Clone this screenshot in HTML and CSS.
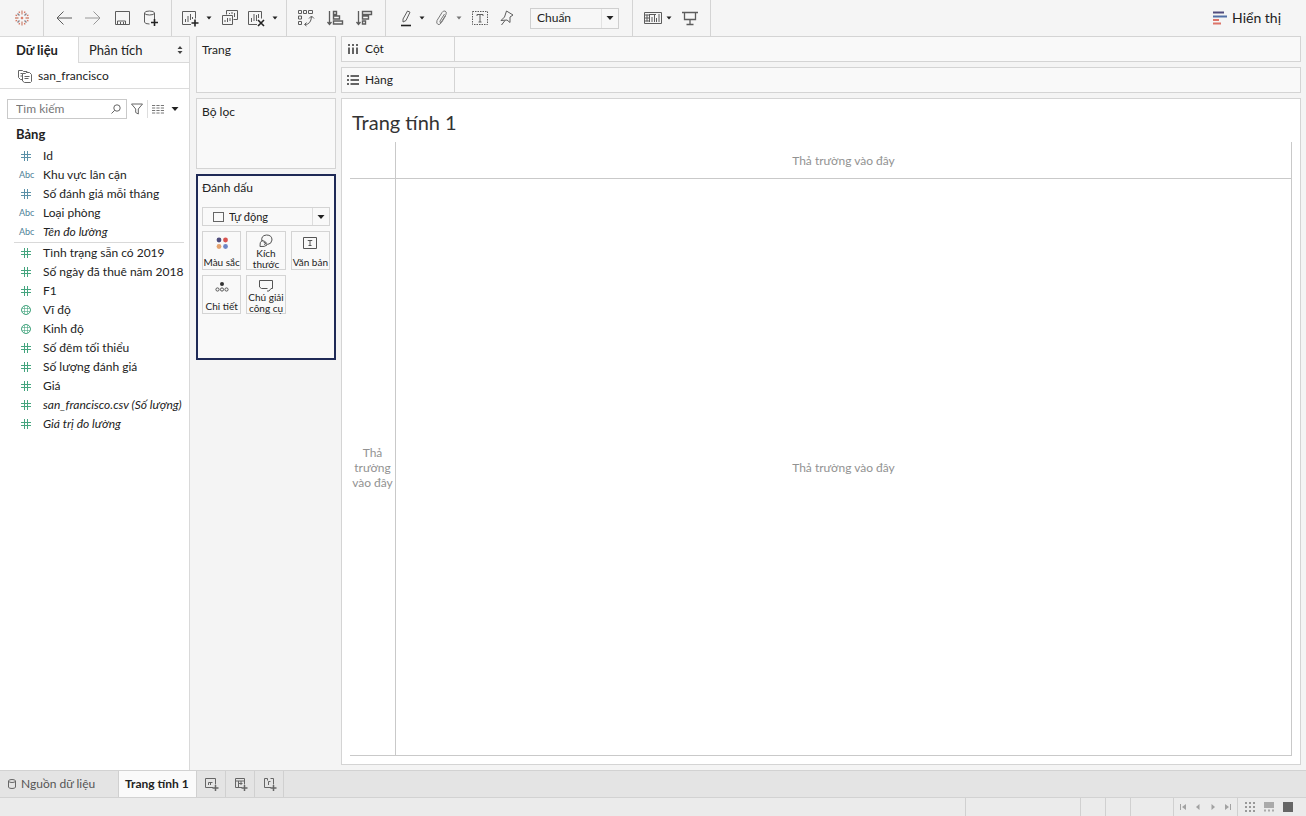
FILE: index.html
```html
<!DOCTYPE html>
<html lang="vi">
<head>
<meta charset="utf-8">
<title>Trang tính 1</title>
<link rel="stylesheet" href="styles.css">
</head>
<body>
<svg class="defs" aria-hidden="true">
  <symbol id="hash" viewBox="0 0 10 10"><path d="M3.5 0v10M6.5 0v10M0 3.5h10M0 6.5h10" fill="none" stroke="currentColor" stroke-width="1"/></symbol>
  <symbol id="globe" viewBox="0 0 10 10"><circle cx="5" cy="5" r="4.500" fill="none" stroke="currentColor"/><path d="M3.500 1v8M6.500 1v8M1 3.500h8M1 6.500h8" fill="none" stroke="currentColor" stroke-width=".6"/></symbol>
  <symbol id="caret" viewBox="0 0 8 8"><path d="M1.500 2.500h5L4 5.500z" fill="currentColor"/></symbol>
  <symbol id="bigcaret" viewBox="0 0 8 8"><path d="M.5 2h7L4 6z" fill="currentColor"/></symbol>
</svg>
<div class="app">
  <header class="toolbar">
    <div class="group group-logo">
      <button class="tool" aria-label="Trang đầu"><svg viewBox="0 0 18 18"><g fill="none" stroke-width="1.300"><path stroke="#d08a78" d="M9 1.500v4M9 12.500v4M2 9h3.500M12.500 9H16"/><path stroke="#85838b" d="M4.500 4.500l2 2M11.500 11.500l2 2M4.500 13.500l2-2M11.500 6.500l2-2"/><path stroke="#d9745f" d="M7.800 9h2.400M9 7.800v2.400M6 2.500l.6 1.600M12 2.500l-.6 1.600M6 15.500l.6-1.600M12 15.500l-.6-1.600M2.500 6l1.600.6M15.500 6l-1.600.6M2.500 12l1.600-.6M15.500 12l-1.600-.6"/></g></svg></button>
    </div>
    <div class="group group-file">
      <button class="tool" aria-label="Hoàn tác"><svg viewBox="0 0 18 18"><path d="M17 9H2M8.500 2.500L2 9l6.500 6.500"/></svg></button>
      <button class="tool faded" aria-label="Làm lại"><svg viewBox="0 0 18 18"><path d="M1 9h15M9.500 2.500L16 9l-6.500 6.500"/></svg></button>
      <button class="tool" aria-label="Lưu"><svg viewBox="0 0 18 18"><path d="M2.500 2.500h14v13h-14zM4.500 15v-3h8v3M7.500 15v-2M10.500 15v-2"/></svg></button>
      <button class="tool" aria-label="Nguồn dữ liệu mới"><svg viewBox="0 0 18 18"><ellipse cx="7.500" cy="4" rx="5" ry="2"/><path d="M2.500 4v9q0 2 5 2M12.500 4v6"/><path class="dark" d="M12.500 10v7M9 13.500h7"/></svg></button>
    </div>
    <div class="group group-sheet">
      <span class="split"><button class="tool" aria-label="Trang tính mới"><svg viewBox="0 0 18 18"><path d="M10 15.500H1.500v-13h13v7M4.500 13v-3M7 13V7M9.500 11V5M11.500 10V8"/><path class="dark" d="M14 10.500v7M10.500 14h7"/></svg></button><button class="caret" aria-label="Thêm"><svg><use href="#caret"/></svg></button></span>
      <button class="tool" aria-label="Nhân bản"><svg viewBox="0 0 18 18"><path d="M5.500 5.500v-4h11v9h-4M1.500 6.500h10v9h-10zM4 13v-2M6.500 13V9M9 12v-3M8.500 5V4M11 5V3M13.500 8V4"/></svg></button>
      <span class="split"><button class="tool" aria-label="Xóa trang"><svg viewBox="0 0 18 18"><path d="M10 15.500H1.500v-13h13v7M4.500 13V9M7 12V5M9.500 12V6M11.500 9V5"/><path class="dark" d="M11 11l6 6M17 11l-6 6"/></svg></button><button class="caret" aria-label="Tùy chọn xóa"><svg><use href="#caret"/></svg></button></span>
    </div>
    <div class="group group-sort">
      <button class="tool" aria-label="Hoán đổi"><svg viewBox="0 0 18 18"><path d="M1.500 1.500h3v3h-3zM6.500 1.500h3v3h-3zM11.500 1.500h4v3h-4zM1.500 7h3v3h-3zM1.500 12.500h3v3h-3zM8 15.500q6 0 6.500-8M12 9.500l2.500-2.500L17 9.500M9.500 13.500l-2 2 2 1.500"/></svg></button>
      <button class="tool" aria-label="Sắp xếp tăng"><svg viewBox="0 0 18 18"><path d="M3.500 2v13M1.500 13l2 2.500 2-2.500" stroke-width="1.300"/><path d="M7.500 2.500h3v3h-3zM7.500 7h6v3h-6zM7.500 12h9v3h-9z" stroke-width="1.400"/></svg></button>
      <button class="tool" aria-label="Sắp xếp giảm"><svg viewBox="0 0 18 18"><path d="M3.500 2v13M1.500 13l2 2.500 2-2.500" stroke-width="1.300"/><path d="M7.500 2.500h9v3h-9zM7.500 7h6v3h-6zM7.500 12h3v3h-3z" stroke-width="1.400"/></svg></button>
    </div>
    <div class="group group-edit">
      <span class="split"><button class="tool" aria-label="Tô sáng"><svg viewBox="0 0 18 18"><path d="M6 13V10l4.500-8 2.500 1.200-4 8.300z"/><path class="dark" d="M4 16.500h10"/></svg></button><button class="caret" aria-label="Tùy chọn tô sáng"><svg><use href="#caret"/></svg></button></span>
      <span class="split"><button class="tool soft" aria-label="Nhóm"><svg viewBox="0 0 18 18"><path d="M10.500 5l-4.500 7q-.5 2 1 1.500l5-8q1-3-1-3.500-2-.3-3 1.500l-5 8q-1 3 1 4 2 .5 3.500-2l4-6.500"/></svg></button><button class="caret faded" aria-label="Tùy chọn nhóm"><svg><use href="#caret"/></svg></button></span>
      <button class="tool" aria-label="Nhãn"><svg viewBox="0 0 18 18"><path d="M1.500 2.500h15v13h-15z" stroke-dasharray="1.500 1"/><path d="M6 7V5.500h6V7M9 5.500V13M7.500 13h3"/></svg></button>
      <button class="tool" aria-label="Ghim"><svg viewBox="0 0 18 18"><path d="M9.500 2l6.500 4-3 2v5.500l-3-2.500-6 .5 3.500-3.500zM8 11.500L4.500 16"/></svg></button>
      <span class="fit"><select aria-label="Độ vừa"><option>Chuẩn</option></select><svg class="fit-caret"><use href="#bigcaret"/></svg></span>
    </div>
    <div class="group group-view">
      <span class="split"><button class="tool" aria-label="Thẻ"><svg viewBox="0 0 18 18"><path d="M.5 3.500h17v11H.5zM3 5.500v7M5.500 5v8M1 6h4M1 9h4M1 12h4M8 13V8M10.500 13V6M12.500 13V9M15 13V5M6 5.500h6"/></svg></button><button class="caret" aria-label="Tùy chọn thẻ"><svg><use href="#caret"/></svg></button></span>
      <button class="tool" aria-label="Trình chiếu"><svg viewBox="0 0 18 18"><path d="M1 3.500h16M3.500 3.500v7h11v-7M9 10.500V15M5.500 15.500h7" stroke-width="1.300"/></svg></button>
    </div>
    <button class="show-me"><svg viewBox="0 0 14 14"><path stroke="#514c7d" d="M0 1.500h11"/><path stroke="#526fa5" d="M0 5.500h14"/><path stroke="#dd7469" d="M0 9h6M0 12.500h8"/></svg>Hiển thị</button>
  </header>

  <main class="workspace">
    <aside class="data-pane">
      <div class="tabs">
        <button class="tab active">Dữ liệu</button>
        <button class="tab">Phân tích<svg viewBox="0 0 6 8"><path d="M3 0l2.500 3H.5zM3 8L.5 5h5z" fill="#444"/></svg></button>
      </div>
      <button class="source"><svg viewBox="0 0 14 14"><path d="M4 10.500H2.500l-2-2v-7h4l1 1h3.500v1.500M4.500 4.500h3l1-1h3l2 2v7l-1 1h-6l-2-1.500zM2.500 4.500h2M2.500 7h2M6.500 7.500h5M6.500 9.500h4" fill="none" stroke="#666"/></svg>san_francisco</button>
      <div class="search-row">
        <label class="search"><input type="text" placeholder="Tìm kiếm" aria-label="Tìm kiếm"><svg viewBox="0 0 10 10"><circle cx="6" cy="4" r="3.200"/><path d="M3.700 6.300L.5 9.500"/></svg></label>
        <button class="filter" aria-label="Lọc"><svg viewBox="0 0 12 12"><path d="M.5 1h11L7.300 6v5l-2.600-1.500V6z"/></svg></button>
        <button class="view-as" aria-label="Xem dạng"><svg viewBox="0 0 12 10"><path d="M0 1.500h12M0 4h12M0 6.500h12M0 9h12" stroke-dasharray="3.200 1.200"/></svg><svg class="view-caret"><use href="#bigcaret"/></svg></button>
      </div>
      <h2>Bảng</h2>
      <ul class="fields dimensions">
        <li><svg><use href="#hash"/></svg>Id</li>
        <li><i>Abc</i>Khu vực lân cận</li>
        <li><svg><use href="#hash"/></svg>Số đánh giá mỗi tháng</li>
        <li><i>Abc</i>Loại phòng</li>
        <li><i>Abc</i><em>Tên đo lường</em></li>
      </ul>
      <ul class="fields measures">
        <li><svg><use href="#hash"/></svg>Tình trạng sẵn có 2019</li>
        <li><svg><use href="#hash"/></svg>Số ngày đã thuê năm 2018</li>
        <li><svg><use href="#hash"/></svg>F1</li>
        <li><svg><use href="#globe"/></svg>Vĩ độ</li>
        <li><svg><use href="#globe"/></svg>Kinh độ</li>
        <li><svg><use href="#hash"/></svg>Số đêm tối thiểu</li>
        <li><svg><use href="#hash"/></svg>Số lượng đánh giá</li>
        <li><svg><use href="#hash"/></svg>Giá</li>
        <li><svg><use href="#hash"/></svg><em>san_francisco.csv (Số lượng)</em></li>
        <li><svg><use href="#hash"/></svg><em>Giá trị đo lường</em></li>
      </ul>
    </aside>

    <section class="cards">
      <div class="card pages">Trang</div>
      <div class="card filters">Bộ lọc</div>
      <div class="card marks">
        <h3>Đánh dấu</h3>
        <div class="mark-type"><span class="square"></span><select aria-label="Loại đánh dấu"><option>Tự động</option></select><svg><use href="#bigcaret"/></svg></div>
        <div class="mark-grid">
          <button><svg viewBox="0 0 14 14"><circle cx="4" cy="4" r="2.400" fill="#4d4b7c"/><circle cx="10.500" cy="4" r="2.400" fill="#d9534f"/><circle cx="4" cy="10.500" r="2.400" fill="#e5a36f"/><circle cx="10.500" cy="10.500" r="2.400" fill="#6d86c6"/></svg><span>Màu sắc</span></button>
          <button class="two-line"><svg viewBox="0 0 14 14"><path class="line" d="M3 7.500Q1.500 1.500 7.500 1q5.500 0 5.500 5-.5 4-4.500 4.500M3 6.500Q.5 8 1 12.500q5 .5 7-1.500 0-3.500-5-4.500zM4.500 8l2.500 1.500-2 1"/></svg><span>Kích thước</span></button>
          <button><svg viewBox="0 0 14 14"><path class="line" d="M.5 1.500h13v11H.5zM5 5V4.500h4V5M7 4.500v5M5.500 9.500h3"/></svg><span>Văn bản</span></button>
          <button><svg viewBox="0 0 14 14"><circle cx="7" cy="4" r="2" fill="#333"/><g class="line"><circle cx="2.500" cy="9.500" r="1.600"/><circle cx="7" cy="9.500" r="1.600"/><circle cx="11.500" cy="9.500" r="1.600"/></g></svg><span>Chi tiết</span></button>
          <button class="two-line"><svg viewBox="0 0 14 14"><path class="line" d="M8.500 10.500H2.500l-2-1.500V2.500h13v8h-1.500l-2 2.500h-2"/></svg><span>Chú giải công cụ</span></button>
        </div>
      </div>
    </section>

    <section class="sheet">
      <div class="shelf"><span class="shelf-name"><svg viewBox="0 0 12 12"><path d="M2 1v2M6 1v2M10 1v2M2 4.500V11M6 4.500V11M10 4.500V11" stroke-width="1.500"/></svg>Cột</span></div>
      <div class="shelf"><span class="shelf-name"><svg viewBox="0 0 12 12"><path d="M0 2h2M0 6h2M0 10h2M3.500 2H12M3.500 6H12M3.500 10H12" stroke-width="1.300"/></svg>Hàng</span></div>
      <div class="view">
        <h1>Trang tính 1</h1>
        <div class="drop-grid">
          <div class="corner"></div>
          <div class="drop top">Thả trường vào đây</div>
          <div class="drop left">Thả trường vào đây</div>
          <div class="drop body">Thả trường vào đây</div>
        </div>
      </div>
    </section>
  </main>

  <nav class="sheet-tabs">
    <button class="data-tab"><svg viewBox="0 0 8 10"><ellipse cx="4" cy="2" rx="3.500" ry="1.500"/><path d="M.5 2v6q0 1.500 3.500 1.500T7.500 8V2"/></svg>Nguồn dữ liệu</button>
    <button class="current">Trang tính 1</button>
    <button class="new" aria-label="Trang tính mới"><svg viewBox="0 0 14 14"><path d="M8 10.500H.5v-9h10v6M3.500 8V5.500h4M5.500 8V6"/><path class="plus" d="M10.500 8v6M7.500 11h6"/></svg></button>
    <button class="new" aria-label="Trang tổng quan mới"><svg viewBox="0 0 14 14"><path d="M8 10.500H1.500v-9h9v6M1.500 4h9M4.500 10V4M4.500 6.500h4M7 4v4"/><path class="plus" d="M10.500 8v6M7.500 11h6"/></svg></button>
    <button class="new" aria-label="Câu chuyện mới"><svg viewBox="0 0 14 14"><path d="M8 10.500H1.500v-9h3v2M7.500 1.500h3v6M5.500 8V4.500h2"/><path class="plus" d="M10.500 8v6M7.500 11h6"/></svg></button>
  </nav>

  <footer class="status">
    <span class="cell wide"></span><span class="cell"></span><span class="cell"></span><span class="cell mid"></span>
    <div class="pager">
      <button aria-label="Đầu"><svg viewBox="0 0 8 8"><path d="M1 1h1v6H1zM7 1v6L3 4z"/></svg></button>
      <button aria-label="Trước"><svg viewBox="0 0 8 8"><path d="M5.500 1v6L2 4z"/></svg></button>
      <button aria-label="Sau"><svg viewBox="0 0 8 8"><path d="M2.500 1v6L6 4z"/></svg></button>
      <button aria-label="Cuối"><svg viewBox="0 0 8 8"><path d="M6 1h1v6H6zM1 1v6l4-3z"/></svg></button>
    </div>
    <div class="modes">
      <button aria-label="Lưới"><svg viewBox="0 0 10 10"><path d="M0 1h10M0 5h10M0 9h10" stroke="#999" stroke-width="2" stroke-dasharray="2 2"/></svg></button>
      <button aria-label="Dải phim"><svg viewBox="0 0 10 10"><path d="M0 0h10v6H0z" fill="#aaa"/><path d="M0 8.500h10" stroke="#aaa" stroke-width="2" stroke-dasharray="2 2"/></svg></button>
      <button aria-label="Trang tính"><svg viewBox="0 0 10 10"><path d="M0 0h10v10H0z" fill="#666"/></svg></button>
    </div>
  </footer>
</div>
</body>
</html>
```
FILE: styles.css
```css
* { box-sizing: border-box; }
body { margin: 0; font: 12px/16px Lato, "Noto Sans", sans-serif; color: #222; background: #f5f5f5; }
button, select, input { font: inherit; color: inherit; background: none; border: 0; padding: 0; margin: 0; appearance: none; border-radius: 0; }
svg { display: block; flex: none; }
h1, h2, h3, ul { margin: 0; padding: 0; font-weight: 400; }
.defs { position: absolute; width: 0; height: 0; }
.app { display: flex; flex-direction: column; height: 100vh; }

.toolbar { display: flex; height: 36px; flex: none; background: #f5f5f5; }
.group { display: flex; align-items: center; gap: 8px; border-right: 1px solid #d4d4d4; }
.group-logo { padding: 0 12px 0 13px; }
.group-file { padding: 0 11px; gap: 11px; }
.group-sheet { padding: 0 7px 0 9px; }
.group-sheet .split { gap: 6px; }
.group-sort { padding: 0 12px 0 10px; gap: 11px; }
.group-edit { padding: 0 13px 0 11px; }
.group-view { padding: 0 11px; }
.split { display: flex; align-items: center; gap: 3px; }
.tool { width: 18px; height: 18px; }
.tool svg { width: 18px; height: 18px; fill: none; stroke: #5c5c5c; stroke-width: 1; }
.tool .dark { stroke: #222; stroke-width: 1.6; }
.faded { opacity: .6; }
.tool.soft { opacity: .8; }
.caret, .caret svg { width: 8px; height: 8px; }
.fit { display: flex; align-items: center; margin-left: 7px; width: 89px; height: 21px; border: 1px solid #cfcfcf; background: #f7f7f7; }
.fit select { flex: 1; width: 100%; padding-left: 6px; height: 19px; border-right: 1px solid #e2e2e2; }
.fit-caret { width: 8px; height: 8px; margin: 0 4px; }
.show-me { display: flex; align-items: center; gap: 5px; margin-left: auto; padding-right: 25px; font-size: 14px; }
.show-me svg { width: 14px; height: 14px; fill: none; stroke-width: 2; }

.workspace { display: flex; flex: 1; min-height: 0; background: #f4f4f4; }
.data-pane { width: 190px; flex: none; background: #fff; border: solid #d9d9d9; border-width: 1px 1px 0 0; }
.tabs { display: flex; height: 26px; }
.tab { display: flex; align-items: center; justify-content: space-between; flex: 1; padding: 0 6px 0 10px; background: #f7f7f7; border: solid #d9d9d9; border-width: 0 0 1px 1px; font-size: 13px; }
.tab.active { flex: none; width: 78px; padding: 0 0 0 16px; background: #fff; border: 0; font-weight: 700; }
.tab svg { width: 6px; height: 8px; }
.source { display: flex; align-items: center; gap: 6px; width: 100%; height: 26px; padding-left: 18px; border-bottom: 1px solid #dcdcdc; }
.source svg { width: 14px; height: 14px; }
.search-row { display: flex; align-items: center; padding: 10px 0 0 7px; }
.search { display: flex; align-items: center; width: 120px; height: 20px; border: 1px solid #c9c9c9; padding: 0 5px 0 8px; }
.search input { flex: 1; min-width: 0; outline: 0; }
.search input::placeholder { color: #777; }
.search svg { width: 10px; height: 10px; fill: none; stroke: #666; }
.filter { height: 18px; padding: 0 4px; border-right: 1px solid #ddd; }
.filter svg { width: 12px; height: 12px; fill: none; stroke: #666; }
.view-as { display: flex; align-items: center; gap: 7px; padding-left: 4px; }
.view-as svg { width: 12px; height: 10px; stroke: #777; }
.view-as .view-caret { width: 8px; height: 8px; stroke: none; }
h2 { margin: 7px 0 4px 16px; font-size: 13px; font-weight: 700; line-height: 16px; }
.fields { list-style: none; margin-left: 14px; margin-right: 5px; }
.fields li { display: flex; align-items: center; height: 19px; white-space: nowrap; }
.fields svg { width: 10px; height: 10px; margin: 0 12px 0 7px; }
.fields i { width: 24px; margin-left: 5px; font-size: 9px; font-style: normal; color: #4c8197; }
.dimensions { border-bottom: 1px solid #d9d9d9; padding-bottom: 1px; }
.dimensions svg { color: #5b91a8; }
.measures svg { color: #45a57f; }

.cards { display: flex; flex-direction: column; gap: 5px; width: 151px; flex: none; padding: 0 5px 0 6px; }
.card { background: #f9f9f9; border: 1px solid #d4d4d4; padding: 5px; }
.pages { height: 57px; }
.filters { height: 71px; }
.marks { min-height: 186px; border: 2px solid #1f2a56; padding: 4px; }
h3 { font-size: 12px; line-height: 16px; }
.mark-type { display: flex; align-items: center; height: 19px; margin-top: 11px; padding-left: 10px; border: 1px solid #d4d4d4; }
.square { width: 11px; height: 10px; border: 1px solid #666; }
.mark-type select { flex: 1; height: 17px; padding-left: 5px; border-right: 1px solid #ddd; font-size: 11px; }
.mark-type svg { width: 8px; height: 8px; margin: 0 4px; }
.mark-grid { display: grid; grid-template-columns: repeat(3, 1fr); grid-auto-rows: 39px; gap: 5px; margin-top: 5px; }
.mark-grid button { display: flex; flex-direction: column; align-items: center; justify-content: space-between; padding: 4px 0 0; border: 1px solid #d4d4d4; font-size: 10px; line-height: 14px; white-space: nowrap; }
.mark-grid svg { width: 14px; height: 14px; }
.mark-grid .two-line { padding-top: 2px; line-height: 11px; white-space: normal; }
.line { fill: none; stroke: #555; }

.sheet { flex: 1; min-width: 0; display: flex; flex-direction: column; gap: 5px; padding-right: 5px; padding-bottom: 5px; }
.shelf { display: flex; flex: none; height: 26px; border: 1px solid #d4d4d4; background: #f9f9f9; }
.shelf-name { display: flex; align-items: center; gap: 6px; width: 113px; padding-left: 5px; border-right: 1px solid #d4d4d4; }
.shelf-name svg { width: 12px; height: 12px; fill: none; stroke: #333; }
.view { flex: 1; min-height: 0; display: flex; flex-direction: column; border: 1px solid #d4d4d4; background: #fff; padding: 11px 8px 8px; }
h1 { padding-left: 2px; font-size: 20px; line-height: 24px; color: #333; }
.drop-grid { flex: 1; min-height: 0; display: grid; grid-template: 37px 1fr / 46px 1fr; margin-top: 8px; border: solid #c9c9c9; border-width: 0 1px 1px 0; }
.drop { display: flex; align-items: center; justify-content: center; text-align: center; line-height: 15px; color: #929292; }
.corner, .left { border-right: 1px solid #c9c9c9; }
.corner, .top { border-bottom: 1px solid #c9c9c9; }

.sheet-tabs { display: flex; height: 28px; flex: none; border: solid #d2d2d2; border-width: 1px 0; background: #e4e4e4; }
.sheet-tabs button { border-right: 1px solid #d0d0d0; }
.sheet-tabs svg { fill: none; stroke: #666; }
.data-tab { display: flex; align-items: center; gap: 5px; width: 119px; padding-left: 8px; color: #555; }
.data-tab svg { width: 8px; height: 10px; }
.current { padding: 0 7px 0 6px; background: #fafafa; font-weight: 700; }
.new { width: 29px; padding-left: 8px; }
.new svg { width: 14px; height: 14px; }
.sheet-tabs .plus { stroke-width: 1.5; }

.status { display: flex; justify-content: flex-end; height: 18px; flex: none; background: #ebebeb; }
.status > * { border-left: 1px solid #d0d0d0; }
.cell { width: 25px; }
.cell.wide { width: 115px; }
.cell.mid { width: 43px; }
.pager { display: flex; align-items: center; gap: 7px; width: 64px; padding-left: 5px; }
.pager svg { width: 8px; height: 8px; fill: #a2a2a2; }
.modes { display: flex; align-items: center; gap: 9px; width: 69px; padding-left: 7px; }
.modes svg { width: 10px; height: 10px; fill: none; }
```
